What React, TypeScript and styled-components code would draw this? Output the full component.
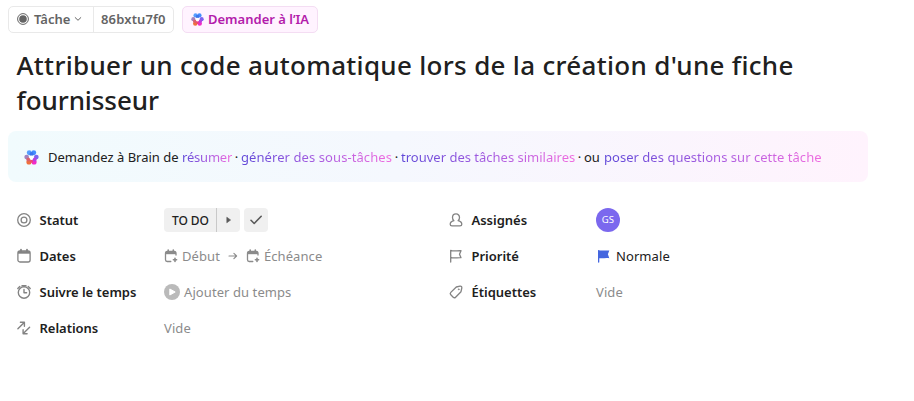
import React from 'react';
import styled, { createGlobalStyle } from 'styled-components';

const GlobalStyle = createGlobalStyle`
  *, *::before, *::after { box-sizing: border-box; }
  body {
    margin: 0;
    background: #fff;
    color: #202020;
    font-family: "Noto Sans", "Open Sans", sans-serif;
    font-size: 13px;
    line-height: 20px;
  }
  svg { display: block; flex: none; }
`;

const Page = styled.main`
  padding: 6px 46px 0 8px;
`;

const TopBar = styled.header`
  display: flex;
  gap: 8px;
`;

const PillGroup = styled.div`
  display: flex;
  width: 166px;
  height: 27px;
  border: 1px solid #e9e9e9;
  border-radius: 5px;
`;

const PillSegment = styled.button<{ $divided?: boolean; $width: number }>`
  display: flex;
  align-items: center;
  width: ${(p) => p.$width}px;
  padding: 0 0 1px ${(p) => (p.$divided ? 8 : 7)}px;
  border: 0;
  border-right: ${(p) => (p.$divided ? '1px solid #e9e9e9' : '0')};
  background: none;
  color: #646464;
  font: 600 13px/20px "Noto Sans", sans-serif;
  white-space: nowrap;
`;

const PillLabel = styled.span<{ $spacing?: number }>`
  letter-spacing: ${(p) => p.$spacing ?? 0}px;
`;

const TypeLabel = styled(PillLabel)`
  margin: 0 4px 0 5px;
`;

const AskButton = styled.button`
  display: flex;
  align-items: center;
  gap: 4px;
  width: 136px;
  height: 27px;
  padding: 0 0 1px 8px;
  border: 1px solid #f4ddf3;
  border-radius: 5px;
  background: #fff3ff;
  color: #b31bab;
  font: 600 13px/20px "Noto Sans", sans-serif;
  white-space: nowrap;
`;

const Title = styled.h1`
  margin: 15px 0 13px;
  padding: 0 9px 0 8.5px;
  font-size: 26px;
  font-weight: 500;
  line-height: 35px;
  letter-spacing: 0.31px;
`;

const TitleTail = styled.span`
  letter-spacing: -0.08px;
`;

const Banner = styled.section`
  display: flex;
  align-items: center;
  gap: 8px;
  height: 51px;
  padding: 1px 16px 0;
  border-radius: 8px;
  background: linear-gradient(90deg, #f1fbfd 0%, #f5f8fe 45%, #fff3fd 100%);
  white-space: nowrap;
`;

const Prompt = styled.p`
  display: flex;
  margin: 0 0 1px 1px;
`;

const PromptLead = styled.span<{ $width: number }>`
  width: ${(p) => p.$width}px;
`;

const PromptLink = styled.a<{ $width: number; $spacing: number }>`
  width: ${(p) => p.$width}px;
  letter-spacing: ${(p) => p.$spacing}px;
  color: transparent;
  background: linear-gradient(90deg, #5f48d8 0%, #a55be0 50%, #f06bdf 100%);
  background-clip: text;
  -webkit-background-clip: text;
`;

const Dot = styled.span`
  width: 9px;
  text-align: center;
`;

const Fields = styled.section`
  display: grid;
  grid-template-columns: 432px 1fr;
  margin-top: 20px;
  padding-left: 8px;
`;

const Column = styled.div`
  display: flex;
  flex-direction: column;
`;

const Field = styled.div`
  display: flex;
  align-items: center;
  height: 36px;
`;

const FieldName = styled.div`
  display: flex;
  align-items: center;
  gap: 7.5px;
  width: 148px;
  color: #838383;
`;

const FieldLabel = styled.span`
  color: #202020;
  font-weight: 600;
  letter-spacing: -0.02px;
  white-space: nowrap;
`;

const FieldValue = styled.div<{ $muted?: boolean; $gap?: number }>`
  display: flex;
  align-items: center;
  gap: ${(p) => p.$gap ?? 4}px;
  color: ${(p) => (p.$muted ? '#8b8b8b' : '#202020')};
  letter-spacing: 0.08px;
  white-space: nowrap;
`;

const StatusButton = styled.button`
  display: flex;
  height: 24px;
  padding: 0;
  border: 0;
  border-radius: 4px;
  background: #f0f0f0;
  color: #202020;
  overflow: hidden;
`;

const StatusText = styled.span`
  width: 53px;
  padding-left: 8px;
  border-right: 1px solid #c9c9c9;
  font: 500 12px/25px "Noto Sans", sans-serif;
  text-align: left;
  letter-spacing: -0.1px;
`;

const StatusNext = styled.span`
  display: grid;
  place-items: center;
  width: 23px;
  color: #5a5a5a;
`;

const CheckButton = styled.button`
  display: grid;
  place-items: center;
  width: 24px;
  height: 24px;
  padding: 0;
  border: 0;
  border-radius: 4px;
  background: #f0f0f0;
  color: #5a5a5a;
`;

const DateSlot = styled.span`
  display: flex;
  align-items: center;
  gap: 4px;
`;

const Avatar = styled.span`
  display: grid;
  place-items: center;
  width: 24px;
  height: 24px;
  border-radius: 50%;
  background: #7b68ee;
  color: #fff;
  font-size: 9.5px;
  line-height: 24px;
`;

const stroke = { fill: 'none', stroke: 'currentColor', strokeWidth: 1.3, strokeLinecap: 'round', strokeLinejoin: 'round' } as const;

const TypeIcon = () => (
  <svg width="12" height="12" viewBox="0 0 12 12">
    <circle cx="6" cy="6" r="5.4" fill="none" stroke="#646464" strokeWidth="1" />
    <circle cx="6" cy="6" r="3.8" fill="#646464" />
  </svg>
);

const ChevronIcon = () => (
  <svg width="8" height="8" viewBox="0 0 8 8" {...stroke} strokeWidth={1}>
    <path d="M1.2 2.6 4 5.3l2.8-2.7" />
  </svg>
);

const BrainIcon = ({ size }: { size: number }) => (
  <svg width={size} height={size} viewBox="0 0 14 14">
    <g>
      <circle cx="4.9" cy="2.6" r="2.3" fill="#559fff" />
      <circle cx="9.1" cy="2.6" r="2.3" fill="#438dff" />
      <circle cx="11.5" cy="6.6" r="2.2" fill="#7c62ef" />
      <circle cx="9.4" cy="11.2" r="2.4" fill="#f22bc6" />
      <circle cx="4.6" cy="11.2" r="2.4" fill="#ef703d" />
      <circle cx="2.5" cy="6.6" r="2.2" fill="#a283bd" />
      <circle cx="7" cy="3.8" r="1.9" fill="#3b74ed" />
      <circle cx="4.1" cy="8.8" r="1.9" fill="#d9606e" />
      <circle cx="9.9" cy="8.8" r="1.9" fill="#b83fdf" />
      <circle cx="7" cy="10.4" r="1.4" fill="#ee4479" />
    </g>
    <circle cx="7" cy="7.1" r="1.9" fill="#fff" />
  </svg>
);

const StatusIcon = () => (
  <svg width="16" height="16" viewBox="0 0 16 16" {...stroke}>
    <circle cx="8" cy="8" r="6.3" />
    <circle cx="8" cy="8" r="2.9" />
  </svg>
);

const CalendarIcon = () => (
  <svg width="16" height="16" viewBox="0 0 16 16" {...stroke}>
    <rect x="1.9" y="3" width="12.2" height="11" rx="2" />
    <path d="M2 3.2h12v2.5H2z" fill="currentColor" stroke="none" />
    <path d="M5 1.7v2M11 1.7v2" strokeWidth="1.8" />
  </svg>
);

const TimerIcon = () => (
  <svg width="16" height="16" viewBox="0 0 16 16" {...stroke} strokeWidth={1.4}>
    <circle cx="8" cy="8.5" r="5.7" />
    <path d="M8 5.5v3.3h2.6M6 1.7h4M1.8 4.6l2-2M14.2 4.6l-2-2" />
  </svg>
);

const RelationsIcon = () => (
  <svg width="16" height="16" viewBox="0 0 16 16" {...stroke} strokeWidth={1.4}>
    <path d="M1.900 8.800 8.200 2.500M4.400 2.300h4v4M13.600 7.200 7.300 13.500M11.100 13.700h-4v-4" />
  </svg>
);

const PersonIcon = () => (
  <svg width="16" height="16" viewBox="0 0 16 16" {...stroke}>
    <path d="M8 1.9c-2.200 0-3.500 1.600-3.500 3.600 0 1.400.6 2.500 1.400 3.200-2.300.6-3.700 1.800-3.700 3.500 0 1.200.7 1.600 1.800 1.600h8c1.100 0 1.800-.4 1.800-1.600 0-1.700-1.400-2.900-3.700-3.500.8-.7 1.400-1.800 1.400-3.200 0-2-1.300-3.600-3.500-3.600Z" />
  </svg>
);

const FlagIcon = () => (
  <svg width="16" height="16" viewBox="0 0 16 16" {...stroke}>
    <path d="M2.700 14V2.300c2.700 1.300 6.400.2 10.300.4l-1.500 3.500 1.500 3.500c-3.900-.2-7.600.9-10.300-.4" />
  </svg>
);

const TagIcon = () => (
  <svg width="16" height="16" viewBox="0 0 16 16" {...stroke}>
    <path d="M8.300 3 12 2.200c1.200-.2 2 .6 1.800 1.800L13 7.700 7.600 13.200c-.7.700-1.700.7-2.400 0L2.800 10.800c-.7-.7-.7-1.700 0-2.400Z" />
    <circle cx="10.700" cy="5.300" r=".5" fill="currentColor" strokeWidth=".6" />
  </svg>
);

const CalendarAddIcon = () => (
  <svg width="14" height="14" viewBox="0 0 14 14" {...stroke}>
    <path d="M12 6V4.200c0-1-.6-1.700-1.700-1.700H3.200c-1 0-1.700.7-1.700 1.700v6.600c0 1 .7 1.700 1.700 1.700h3.600" />
    <path d="M1.500 2.700H12v2.500H1.500z" fill="currentColor" stroke="none" />
    <path d="M4.200 1v1.500M9.300 1v1.500M11 9.200v3.200M9.400 10.800h3.200" strokeWidth="1.600" />
  </svg>
);

const ArrowIcon = () => (
  <svg width="10" height="10" viewBox="0 0 10 10" {...stroke} strokeWidth={1.1}>
    <path d="M1 5h7.500M5.900 2.300 8.600 5 5.900 7.700" />
  </svg>
);

const PlayIcon = () => (
  <svg width="16" height="16" viewBox="0 0 16 16">
    <circle cx="8" cy="8" r="8" fill="#bababa" />
    <path d="M5.800 5v6l5.400-3Z" fill="#fff" stroke="#fff" strokeLinejoin="round" />
  </svg>
);

const CaretIcon = () => (
  <svg width="6" height="8" viewBox="0 0 6 8">
    <path d="M.8 1.200v5.600L4.600 4Z" fill="currentColor" stroke="currentColor" strokeWidth=".6" strokeLinejoin="round" />
  </svg>
);

const CheckIcon = () => (
  <svg width="14" height="14" viewBox="0 0 14 14" {...stroke} strokeWidth={1.6}>
    <path d="m2 7.300 3.200 3.200L12.200 3.300" />
  </svg>
);

const PriorityFlagIcon = () => (
  <svg width="16" height="16" viewBox="0 0 16 16">
    <path d="M2 2c3.800 1.200 7 .1 11.300.6l-1.400 3.700 1.400 3.900c-3.900-.5-6.700.5-10 0V14a.65.65 0 0 1-1.300 0Z" fill="#4466df" />
  </svg>
);

const rows = {
  left: [
    {
      label: 'Statut',
      icon: <StatusIcon />,
      value: (
        <FieldValue>
          <StatusButton>
            <StatusText>TO DO</StatusText>
            <StatusNext><CaretIcon /></StatusNext>
          </StatusButton>
          <CheckButton><CheckIcon /></CheckButton>
        </FieldValue>
      ),
    },
    {
      label: 'Dates',
      icon: <CalendarIcon />,
      value: (
        <FieldValue $muted $gap={8}>
          <DateSlot><CalendarAddIcon />Début</DateSlot>
          <ArrowIcon />
          <DateSlot><CalendarAddIcon />Échéance</DateSlot>
        </FieldValue>
      ),
    },
    { label: 'Suivre le temps', icon: <TimerIcon />, value: <FieldValue $muted><PlayIcon />Ajouter du temps</FieldValue> },
    { label: 'Relations', icon: <RelationsIcon />, value: <FieldValue $muted>Vide</FieldValue> },
  ],
  right: [
    { label: 'Assignés', icon: <PersonIcon />, value: <FieldValue><Avatar>GS</Avatar></FieldValue> },
    { label: 'Priorité', icon: <FlagIcon />, value: <FieldValue><PriorityFlagIcon />Normale</FieldValue> },
    { label: 'Étiquettes', icon: <TagIcon />, value: <FieldValue $muted>Vide</FieldValue> },
  ],
};

export default function App() {
  return (
    <>
      <GlobalStyle />
      <Page>
        <TopBar>
          <PillGroup>
            <PillSegment $divided $width={85}>
              <TypeIcon />
              <TypeLabel>Tâche</TypeLabel>
              <ChevronIcon />
            </PillSegment>
            <PillSegment $width={79}>
              <PillLabel $spacing={0.15}>86bxtu7f0</PillLabel>
            </PillSegment>
          </PillGroup>
          <AskButton>
            <BrainIcon size={13} />
            <PillLabel>Demander à l’IA</PillLabel>
          </AskButton>
        </TopBar>

        <Title>
          Attribuer un code automatique lors de la création d'une fiche <TitleTail>fournisseur</TitleTail>
        </Title>

        <Banner>
          <BrainIcon size={15} />
          <Prompt>
            <PromptLead $width={134}>Demandez à Brain de</PromptLead>
            <PromptLink $width={50} $spacing={-0.2}>résumer</PromptLink>
            <Dot>·</Dot>
            <PromptLink $width={151} $spacing={0.08}>générer des sous-tâches</PromptLink>
            <Dot>·</Dot>
            <PromptLink $width={174} $spacing={0}>trouver des tâches similaires</PromptLink>
            <Dot>·</Dot>
            <PromptLead $width={20}>ou</PromptLead>
            <PromptLink $width={219} $spacing={0.03}>poser des questions sur cette tâche</PromptLink>
          </Prompt>
        </Banner>

        <Fields>
          {[rows.left, rows.right].map((column, i) => (
            <Column key={i}>
              {column.map((row) => (
                <Field key={row.label}>
                  <FieldName>
                    {row.icon}
                    <FieldLabel>{row.label}</FieldLabel>
                  </FieldName>
                  {row.value}
                </Field>
              ))}
            </Column>
          ))}
        </Fields>
      </Page>
    </>
  );
}
